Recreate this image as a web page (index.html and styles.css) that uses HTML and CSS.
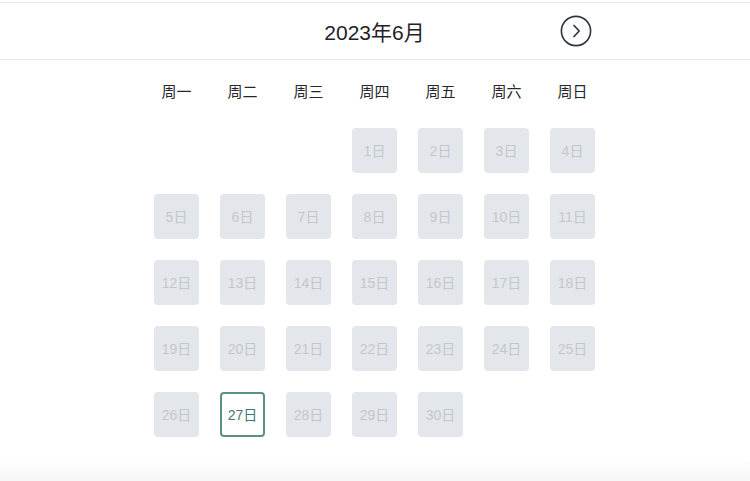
FILE: index.html
```html
<!DOCTYPE html>
<html lang="zh-CN">
<head>
<meta charset="utf-8">
<link rel="stylesheet" href="styles.css">
</head>
<body>
<div class="page">
  <header class="header">
    <div class="header-inner">
      <span></span>
      <h1 class="title">2023年6月</h1>
      <button class="next" aria-label="下个月">
        <svg width="32" height="32" viewBox="0 0 32 32"><circle cx="16" cy="16" r="14.6" fill="none" stroke="#2f3440" stroke-width="1.6"/><path d="M14 10.5 L19.2 16 L14 21.5" fill="none" stroke="#2f3440" stroke-width="1.7" stroke-linecap="round" stroke-linejoin="round"/></svg>
      </button>
    </div>
  </header>
  <div class="weekdays">
    <span>周一</span><span>周二</span><span>周三</span><span>周四</span><span>周五</span><span>周六</span><span>周日</span>
  </div>
  <div class="days">
    <span class="empty"></span><span class="empty"></span><span class="empty"></span>
    <span class="day">1日</span><span class="day">2日</span><span class="day">3日</span><span class="day">4日</span>
    <span class="day">5日</span><span class="day">6日</span><span class="day">7日</span><span class="day">8日</span><span class="day">9日</span><span class="day">10日</span><span class="day">11日</span>
    <span class="day">12日</span><span class="day">13日</span><span class="day">14日</span><span class="day">15日</span><span class="day">16日</span><span class="day">17日</span><span class="day">18日</span>
    <span class="day">19日</span><span class="day">20日</span><span class="day">21日</span><span class="day">22日</span><span class="day">23日</span><span class="day">24日</span><span class="day">25日</span>
    <span class="day">26日</span><span class="day today">27日</span><span class="day">28日</span><span class="day">29日</span><span class="day">30日</span>
  </div>
  <div class="footer"></div>
</div>
</body>
</html>
```
FILE: styles.css
```css
* { box-sizing: border-box; }
html, body { margin: 0; padding: 0; background: #fff; }
body {
  font-family: "Noto Sans CJK SC", "Noto Sans", sans-serif;
  width: 750px;
  height: 481px;
  overflow: hidden;
}
.page {
  display: flex;
  flex-direction: column;
  height: 481px;
  padding-top: 2px;
}
.header {
  border-top: 1px solid #e9eaef;
  border-bottom: 1px solid #eaebee;
  height: 58px;
  display: flex;
  padding-left: 154px;
}
.header-inner {
  width: 441px;
  display: grid;
  grid-template-columns: 1fr auto 1fr;
  align-items: center;
}
.title {
  margin: 0;
  font-family: "Liberation Sans", "Noto Sans CJK SC", sans-serif;
  font-weight: 400;
  font-size: 21px;
  color: #1f2229;
  margin-bottom: 1px;
}
.next {
  justify-self: end;
  margin-right: 3px;
  padding: 0;
  border: 0;
  background: none;
  width: 32px;
  height: 32px;
  display: flex;
}
.weekdays, .days {
  width: 441px;
  margin-left: 154px;
  display: grid;
  grid-template-columns: repeat(7, 45px);
  column-gap: 21px;
}
.weekdays {
  padding-top: 20px;
  height: 68px;
}
.weekdays span {
  text-align: center;
  font-size: 15px;
  line-height: 21px;
  color: #25282e;
}
.days {
  row-gap: 21px;
}
.day {
  height: 45px;
  border-radius: 4px;
  background: #e3e6eb;
  color: #c3c7cd;
  font-size: 14px;
  display: flex;
  align-items: center;
  justify-content: center;
  padding-bottom: 1px;
  font-family: "Liberation Sans", "Noto Sans CJK SC", sans-serif;
}
.day.today {
  background: #fff;
  border: 2px solid #5a9088;
  color: #3f7a71;
}
.footer {
  margin-top: auto;
  height: 22px;
  background: linear-gradient(#ffffff, #f7f7f7);
}
```
